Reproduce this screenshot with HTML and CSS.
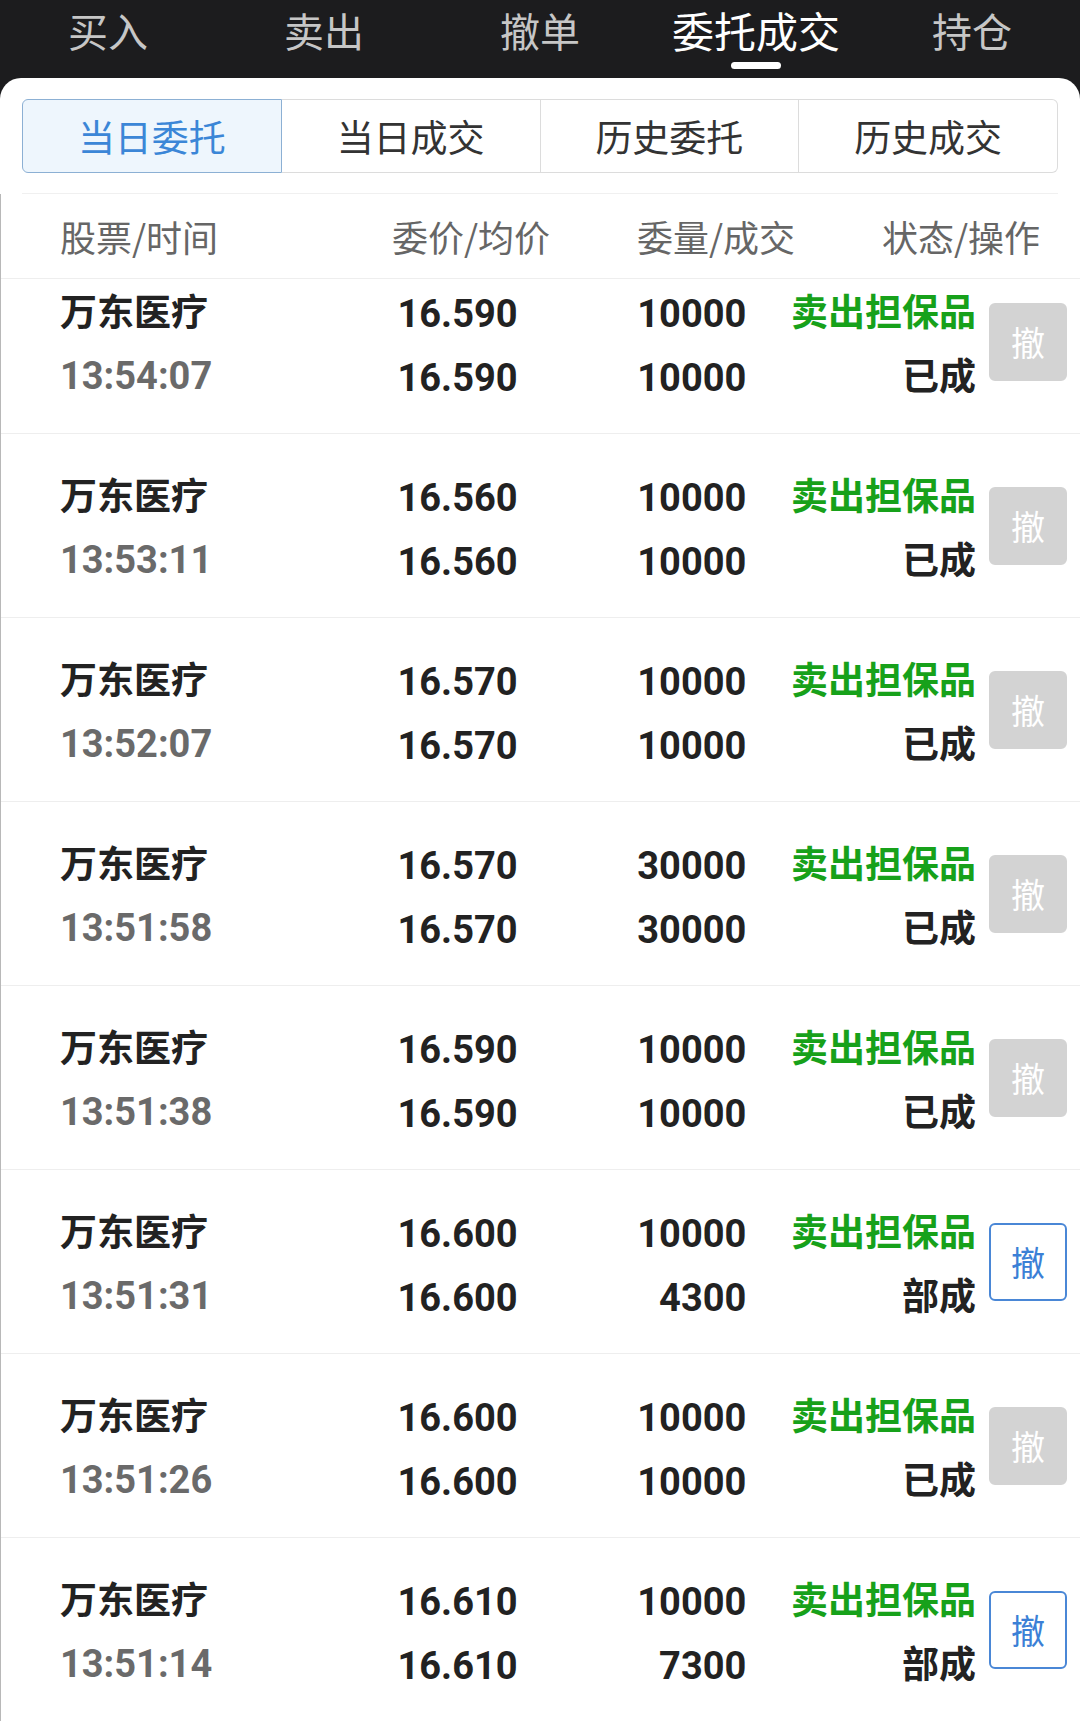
FILE: index.html
```html
<!DOCTYPE html>
<html lang="zh-CN">
<head>
    <meta charset="UTF-8">
    <meta name="viewport" content="width=device-width, initial-scale=1.0">
    <title>委托成交</title>
    <link rel="stylesheet" href="styles.css">
</head>
<body>

<div class="topnav">
    <div class="nav-item">买入</div>
    <div class="nav-item">卖出</div>
    <div class="nav-item">撤单</div>
    <div class="nav-item active">委托成交</div>
    <div class="nav-item">持仓</div>
</div>

<div class="panel">
    <div class="segments">
        <div class="seg active">当日委托</div>
        <div class="seg">当日成交</div>
        <div class="seg">历史委托</div>
        <div class="seg">历史成交</div>
    </div>

    <div class="content">
        <div class="thead">
            <div class="th first">股票/时间</div>
            <div class="th">委价/均价</div>
            <div class="th">委量/成交</div>
            <div class="th">状态/操作</div>
        </div>

        <div class="list">
            <div class="rows">
                <div class="row">
                    <div class="col name"><span>万东医疗</span><span class="time">13:54:07</span></div>
                    <div class="col num"><span>16.590</span><span>16.590</span></div>
                    <div class="col num"><span>10000</span><span>10000</span></div>
                    <div class="col status"><span class="green">卖出担保品</span><span>已成</span></div>
                    <button class="cancel disabled">撤</button>
                </div>
                <div class="row">
                    <div class="col name"><span>万东医疗</span><span class="time">13:53:11</span></div>
                    <div class="col num"><span>16.560</span><span>16.560</span></div>
                    <div class="col num"><span>10000</span><span>10000</span></div>
                    <div class="col status"><span class="green">卖出担保品</span><span>已成</span></div>
                    <button class="cancel disabled">撤</button>
                </div>
                <div class="row">
                    <div class="col name"><span>万东医疗</span><span class="time">13:52:07</span></div>
                    <div class="col num"><span>16.570</span><span>16.570</span></div>
                    <div class="col num"><span>10000</span><span>10000</span></div>
                    <div class="col status"><span class="green">卖出担保品</span><span>已成</span></div>
                    <button class="cancel disabled">撤</button>
                </div>
                <div class="row">
                    <div class="col name"><span>万东医疗</span><span class="time">13:51:58</span></div>
                    <div class="col num"><span>16.570</span><span>16.570</span></div>
                    <div class="col num"><span>30000</span><span>30000</span></div>
                    <div class="col status"><span class="green">卖出担保品</span><span>已成</span></div>
                    <button class="cancel disabled">撤</button>
                </div>
                <div class="row">
                    <div class="col name"><span>万东医疗</span><span class="time">13:51:38</span></div>
                    <div class="col num"><span>16.590</span><span>16.590</span></div>
                    <div class="col num"><span>10000</span><span>10000</span></div>
                    <div class="col status"><span class="green">卖出担保品</span><span>已成</span></div>
                    <button class="cancel disabled">撤</button>
                </div>
                <div class="row">
                    <div class="col name"><span>万东医疗</span><span class="time">13:51:31</span></div>
                    <div class="col num"><span>16.600</span><span>16.600</span></div>
                    <div class="col num"><span>10000</span><span>4300</span></div>
                    <div class="col status"><span class="green">卖出担保品</span><span>部成</span></div>
                    <button class="cancel">撤</button>
                </div>
                <div class="row">
                    <div class="col name"><span>万东医疗</span><span class="time">13:51:26</span></div>
                    <div class="col num"><span>16.600</span><span>16.600</span></div>
                    <div class="col num"><span>10000</span><span>10000</span></div>
                    <div class="col status"><span class="green">卖出担保品</span><span>已成</span></div>
                    <button class="cancel disabled">撤</button>
                </div>
                <div class="row">
                    <div class="col name"><span>万东医疗</span><span class="time">13:51:14</span></div>
                    <div class="col num"><span>16.610</span><span>16.610</span></div>
                    <div class="col num"><span>10000</span><span>7300</span></div>
                    <div class="col status"><span class="green">卖出担保品</span><span>部成</span></div>
                    <button class="cancel">撤</button>
                </div>
            </div>
        </div>
    </div>
</div>

</body>
</html>
```

FILE: styles.css
```css
body {
    margin: 0;
    background-color: #1c1c1e;
    font-family: Roboto, "Noto Sans CJK SC", sans-serif;
    height: 1721px;
    overflow: hidden;
}
.topnav {
    display: flex;
    height: 78px;
}
.nav-item {
    flex: 1;
    text-align: center;
    font-family: "Noto Sans CJK SC", sans-serif;
    font-size: 40px;
    line-height: 60px;
    color: #c6c6c6;
    position: relative;
}
.nav-item.active {
    color: #ffffff;
    font-size: 42px;
}
.nav-item.active::after {
    content: "";
    position: absolute;
    left: 50%;
    margin-left: -25px;
    bottom: 9px;
    width: 50px;
    height: 7px;
    border-radius: 4px;
    background-color: #ffffff;
}
.panel {
    background-color: #ffffff;
    border-radius: 21px 21px 0 0;
    height: 1643px;
    overflow: hidden;
}
.segments {
    display: flex;
    margin: 0 22px;
    padding-top: 21px;
    padding-bottom: 20px;
    border-bottom: 1px solid #f0f0f0;
}
.seg {
    flex: 1;
    height: 72px;
    line-height: 72px;
    text-align: center;
    font-family: "Noto Sans CJK SC", sans-serif;
    font-size: 37px;
    color: #333333;
    border: 1px solid #dcdcdc;
    border-left: none;
}
.seg:first-child {
    border-left: 1px solid #dcdcdc;
    border-radius: 6px 0 0 6px;
}
.seg:last-child {
    border-radius: 0 6px 6px 0;
}
.seg.active {
    background-color: #eef6fd;
    border-color: #8cb0d4;
    color: #3b86d7;
}
.content {
    border-left: 1px solid #b8b8b8;
}
.thead {
    display: flex;
    height: 84px;
    padding: 0 40px 0 59px;
    border-bottom: 1px solid #eeeeee;
    align-items: center;
}
.th {
    flex: 1;
    text-align: right;
    font-family: "Noto Sans CJK SC", sans-serif;
    font-size: 36px;
    color: #666666;
}
.th.first {
    text-align: left;
}
.list {
    overflow: hidden;
}
.rows {
    margin-top: -29px;
}
.row {
    display: flex;
    align-items: flex-start;
    height: 155px;
    padding: 28px 13px 0 59px;
    border-bottom: 1px solid #eeeeee;
}
.col {
    display: flex;
    flex-direction: column;
    line-height: 64px;
    font-size: 38px;
    font-weight: bold;
    color: #222222;
}
.col.name {
    width: 237px;
    font-size: 37px;
    font-family: "Noto Sans CJK SC", sans-serif;
}
.col.name .time {
    font-family: Roboto, sans-serif;
    font-size: 38px;
    color: #6a6a6a;
    padding-top: 4px;
    line-height: 60px;
}
.col.num {
    text-align: right;
    width: 221px;
    padding-top: 4px;
}
.col.num + .col.num {
    width: 229px;
}
.col.status {
    width: 230px;
    text-align: right;
    font-size: 37px;
    font-family: "Noto Sans CJK SC", sans-serif;
}
.green {
    color: #17a11a;
}
.cancel {
    align-self: center;
    margin: 0 0 28px 13px;
    width: 78px;
    height: 78px;
    padding: 0;
    border: 2px solid #4a87d6;
    border-radius: 6px;
    background-color: #ffffff;
    color: #3b80d6;
    font-family: "Noto Sans CJK SC", sans-serif;
    font-size: 34px;
}
.cancel.disabled {
    border-color: #d3d3d3;
    background-color: #d3d3d3;
    color: #ffffff;
}
```
